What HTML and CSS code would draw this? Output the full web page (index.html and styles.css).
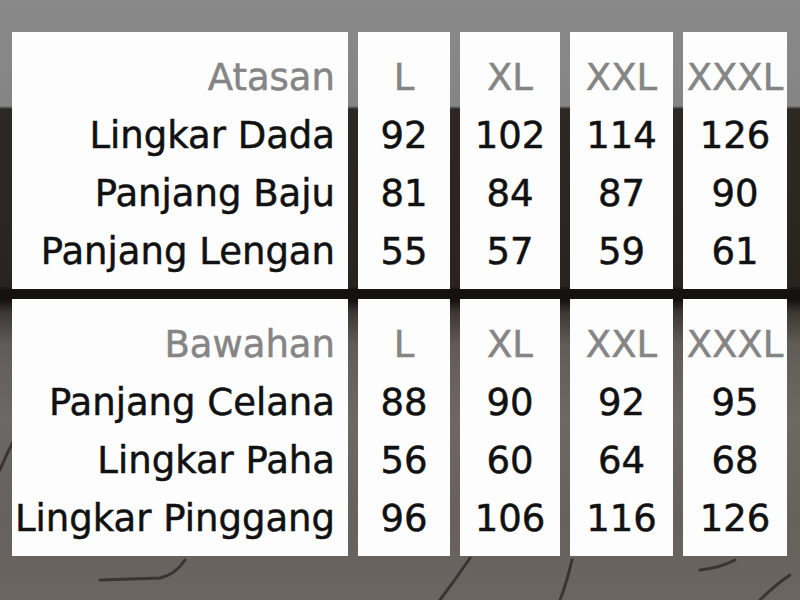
FILE: index.html
```html
<!DOCTYPE html>
<html lang="id">
<head>
<meta charset="utf-8">
<title>Size Chart</title>
<link rel="stylesheet" href="styles.css">
</head>
<body>
<div class="scene">
  <svg class="cracks" width="800" height="600" viewBox="0 0 800 600" aria-hidden="true">
    <path d="M0 470 Q6 455 14 440" />
    <path d="M100 580 L160 578 Q175 575 185 560" />
    <path d="M440 600 Q455 580 470 558" />
    <path d="M560 600 Q566 585 572 560" />
    <path d="M700 570 Q720 568 735 560" />
    <path d="M760 600 Q775 585 790 575" />
  </svg>
  <div class="board">
    <div class="section">
      <div class="card labels">
        <div class="head">Atasan</div>
        <div>Lingkar Dada</div>
        <div>Panjang Baju</div>
        <div>Panjang Lengan</div>
      </div>
      <div class="card size s-l">
        <div class="head">L</div><div>92</div><div>81</div><div>55</div>
      </div>
      <div class="card size s-xl">
        <div class="head">XL</div><div>102</div><div>84</div><div>57</div>
      </div>
      <div class="card size s-xxl">
        <div class="head">XXL</div><div>114</div><div>87</div><div>59</div>
      </div>
      <div class="card size s-xxxl">
        <div class="head">XXXL</div><div>126</div><div>90</div><div>61</div>
      </div>
    </div>
    <div class="section">
      <div class="card labels">
        <div class="head">Bawahan</div>
        <div>Panjang Celana</div>
        <div>Lingkar Paha</div>
        <div>Lingkar Pinggang</div>
      </div>
      <div class="card size s-l">
        <div class="head">L</div><div>88</div><div>56</div><div>96</div>
      </div>
      <div class="card size s-xl">
        <div class="head">XL</div><div>90</div><div>60</div><div>106</div>
      </div>
      <div class="card size s-xxl">
        <div class="head">XXL</div><div>92</div><div>64</div><div>116</div>
      </div>
      <div class="card size s-xxxl">
        <div class="head">XXXL</div><div>95</div><div>68</div><div>126</div>
      </div>
    </div>
  </div>
</div>
</body>
</html>
```

FILE: styles.css
```css
html, body {
  margin: 0;
  padding: 0;
}

body {
  width: 800px;
  height: 600px;
  overflow: hidden;
  font-family: "DejaVu Sans", "Liberation Sans", sans-serif;
}

.scene {
  position: relative;
  width: 800px;
  height: 600px;
  background:
    linear-gradient(to bottom,
      #898989 0,
      #858585 106px,
      #2e2825 109px,
      #2a2421 286px,
      #141110 290px,
      #141110 300px,
      #3c3633 312px,
      #625c58 345px,
      #6d6864 420px,
      #66615d 520px,
      #6a6561 600px);
}

.cracks {
  position: absolute;
  left: 0;
  top: 0;
  fill: none;
  stroke: #2a2522;
  stroke-width: 3;
  stroke-linecap: round;
  opacity: 0.75;
}

.board {
  position: relative;
  display: flex;
  flex-direction: column;
  gap: 10px;
  padding: 32px 0 0 12px;
}

.section {
  display: flex;
  gap: 10px;
  height: 257px;
}

.card {
  background: #fdfdfd;
  box-sizing: border-box;
  padding-top: 17px;
  font-size: 37px;
  line-height: 58px;
  color: #111;
  white-space: nowrap;
  -webkit-text-stroke: 0.5px currentColor;
}

.head {
  color: #858585;
}

.labels {
  width: 336px;
  text-align: right;
  padding-right: 13px;
}

.size {
  text-align: center;
}

.s-l { width: 92px; }
.s-xl { width: 100px; }
.s-xxl { width: 103px; }
.s-xxxl { width: 104px; }
```
